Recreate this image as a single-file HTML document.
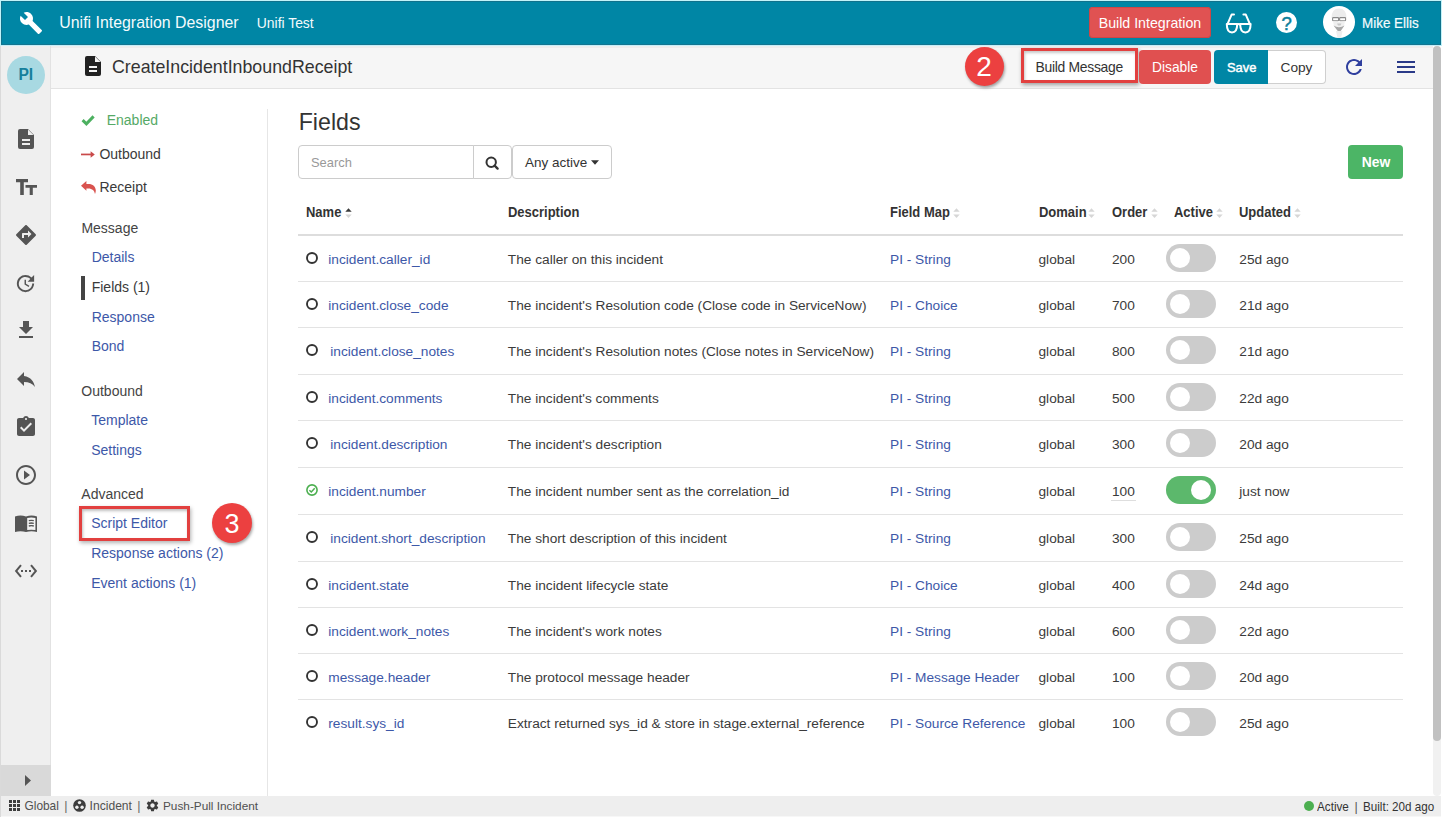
<!DOCTYPE html><html><head><meta charset="utf-8"><style>
html,body{margin:0;padding:0;}
body{width:1442px;height:817px;position:relative;overflow:hidden;background:#fff;font-family:"Liberation Sans",sans-serif;}
.t{position:absolute;white-space:nowrap;line-height:1;}
.r{position:absolute;box-sizing:border-box;}
</style></head><body>
<div class="r" style="left:0px;top:0px;width:1442px;height:817px;background:#fff"></div>
<div class="r" style="left:1px;top:1px;width:1440px;height:44px;background:#0086a5"></div>
<div class="r" style="left:0px;top:0px;width:1442px;height:1px;background:#c2f3f9"></div>
<div class="r" style="left:1px;top:1px;width:1440px;height:1px;background:#10728c"></div>
<div class="r" style="left:1440px;top:1px;width:1px;height:44px;background:#10728c"></div>
<div class="r" style="left:1441px;top:0px;width:1px;height:46px;background:#c2f3f9"></div>
<div class="r" style="left:0px;top:46px;width:1px;height:771px;background:#dadada"></div>
<div class="r" style="left:0px;top:0px;width:1px;height:46px;background:#c2f3f9"></div>
<div class="r" style="left:1px;top:1px;width:1px;height:44px;background:#10728c"></div>
<div class="r" style="left:1px;top:44px;width:1440px;height:1px;background:#137590"></div>
<div class="r" style="left:1px;top:45px;width:1440px;height:1px;background:#c4eef8"></div>
<svg class="r" style="left:19px;top:10.5px;" width="24" height="24" viewBox="0 0 24 24"><path fill="#fff" d="M22.7 19l-9.1-9.1c.9-2.3.4-5-1.5-6.9-2-2-5-2.4-7.4-1.3L9 6 6 9 1.6 4.7C.4 7.1.9 10.1 2.9 12.1c1.9 1.9 4.6 2.4 6.9 1.5l9.1 9.1c.4.4 1 .4 1.4 0l2.3-2.3c.5-.4.5-1.1.1-1.4z"/></svg>
<div class="t" style="left:59.3px;top:15.44px;font-size:15.9px;color:#f4fbfd;">Unifi Integration Designer</div>
<div class="t" style="left:256.8px;top:16.83px;font-size:13.9px;color:#f4fbfd;">Unifi Test</div>
<div class="r" style="left:1089px;top:7px;width:122px;height:31px;background:#e05252;border-radius:4px;box-shadow:inset 0 0 0 1px #cf4646"></div>
<div class="t" style="left:1098.7px;top:16.28px;font-size:14.2px;color:#ffffff;">Build Integration</div>
<svg class="r" style="left:1225px;top:12px;" width="28" height="22" viewBox="0 0 28 22"><g fill="none" stroke="#fff" stroke-width="2" stroke-linejoin="round" stroke-linecap="round"><path d="M1.8 12 H12.2 Q12.2 20.4 7 20.4 Q1.8 20.4 1.8 12Z"/><path d="M15.2 12 H25.6 Q25.6 20.4 20.4 20.4 Q15.2 20.4 15.2 12Z"/><path d="M12.2 12.6 Q13.7 11.4 15.2 12.6"/><path d="M2.6 11.8 L6.6 2.6 H9"/><path d="M24.8 11.8 L20.8 2.6 H18.4"/></g></svg>
<svg class="r" style="left:1276px;top:12px;" width="21" height="21" viewBox="0 0 21 21"><circle cx="10.5" cy="10.5" r="10.5" fill="#fff"/><text x="10.6" y="17.6" text-anchor="middle" font-family="Liberation Sans" font-size="18.5" fill="#0b7f9c" stroke="#0b7f9c" stroke-width="0.5">?</text></svg>
<svg class="r" style="left:1323px;top:6px;" width="32" height="32" viewBox="0 0 32 32"><circle cx="16" cy="16" r="16" fill="#fff"/><path d="M8.5 12 Q8.5 2.5 16 2.5 Q23.5 2.5 23.5 12 Z" fill="#ececec"/><rect x="9.6" y="11.6" width="6" height="3.2" rx="0.8" fill="none" stroke="#8a8a8a" stroke-width="1.1"/><rect x="16.6" y="11.6" width="6" height="3.2" rx="0.8" fill="none" stroke="#8a8a8a" stroke-width="1.1"/><path d="M10 15 Q16 17 22 15 L21 20 Q16 22 11 20Z" fill="#f0f0f0"/><path d="M14 17.5 H18.5 L17.5 19.5 H15Z" fill="#c8c8c8"/><path d="M10.5 19.5 Q16 23 21.5 19.5 L16.3 27 Z" fill="#a8a8a8"/><path d="M13 25 H19.5 L18 32 H14.5Z" fill="#eeeeee"/></svg>
<div class="t" style="left:1361.6px;top:16.24px;font-size:14.6px;color:#f4fbfd;transform:scaleX(0.92);transform-origin:0 0;-webkit-text-stroke:0.2px #f4fbfd;">Mike Ellis</div>
<div class="r" style="left:51px;top:46px;width:1382px;height:42px;background:#f6f6f6"></div>
<div class="r" style="left:51px;top:46px;width:1382px;height:2px;background:#eeeeee"></div>
<div class="r" style="left:51px;top:88px;width:1382px;height:1px;background:#e3e3e3"></div>
<svg class="r" style="left:85px;top:56px;" width="16" height="20" viewBox="0 0 16 20"><path fill="#222" d="M2 0 H10 L16 6 V18 Q16 20 14 20 H2 Q0 20 0 18 V2 Q0 0 2 0Z"/><path fill="#f5f5f5" d="M10 0.5 V6 H15.5Z"/><rect x="4" y="10" width="8" height="2" fill="#f5f5f5"/><rect x="4" y="14" width="8" height="2" fill="#f5f5f5"/></svg>
<div class="t" style="left:112.0px;top:58.93px;font-size:17.8px;color:#333333;">CreateIncidentInboundReceipt</div>
<div class="r" style="left:964.5px;top:46.5px;width:39px;height:39px;border-radius:50%;background:#ec4040;box-shadow:1px 2px 3px rgba(0,0,0,0.35)"></div>
<div class="t" style="left:974.0px;top:53.49px;font-size:28px;color:#ffffff;width:20px;text-align:center;">2</div>
<div class="r" style="left:1021px;top:48px;width:117px;height:35px;border:3px solid #e2403f;background:#fff;box-shadow:1px 2px 4px rgba(0,0,0,0.35), inset 1px 2px 3px rgba(0,0,0,0.22)"></div>
<div class="t" style="left:1035.6px;top:60.63px;font-size:13.9px;color:#333333;letter-spacing:-0.3px;">Build Message</div>
<div class="r" style="left:1139px;top:50px;width:72px;height:34px;background:#e05050;border-radius:4px"></div>
<div class="t" style="left:1152.0px;top:60.92px;font-size:13.8px;color:#ffffff;">Disable</div>
<div class="r" style="left:1214px;top:50px;width:54px;height:34px;background:#0086a5;border-radius:4px 0 0 4px"></div>
<div class="t" style="left:1227.0px;top:61.68px;font-size:12.9px;color:#ffffff;-webkit-text-stroke:0.45px #fff;">Save</div>
<div class="r" style="left:1268px;top:50px;width:58px;height:34px;background:#fff;border:1px solid #cfcfcf;border-left:none;border-radius:0 4px 4px 0"></div>
<div class="t" style="left:1280.5px;top:61.00px;font-size:13.7px;color:#333333;">Copy</div>
<svg class="r" style="left:1341.5px;top:55px;" width="24" height="24" viewBox="0 0 24 24"><path fill="#2f3f9e" d="M17.65 6.35C16.2 4.9 14.21 4 12 4c-4.42 0-7.99 3.58-7.99 8s3.57 8 7.99 8c3.73 0 6.84-2.55 7.73-6h-2.08c-.82 2.33-3.04 4-5.65 4-3.31 0-6-2.69-6-6s2.69-6 6-6c1.66 0 3.14.69 4.22 1.78L13 11h7V4l-2.35 2.35z"/></svg>
<div class="r" style="left:1397px;top:61px;width:18px;height:2px;background:#2a3a88"></div>
<div class="r" style="left:1397px;top:66px;width:18px;height:2px;background:#2a3a88"></div>
<div class="r" style="left:1397px;top:71px;width:18px;height:2px;background:#2a3a88"></div>
<div class="r" style="left:1433px;top:46px;width:8px;height:750px;background:#f1f1f1;border-radius:4px"></div>
<div class="r" style="left:1433px;top:46px;width:8px;height:695px;background:#c1c1c1;border-radius:4px"></div>
<div class="r" style="left:1441px;top:46px;width:1px;height:771px;background:#fff"></div>
<div class="r" style="left:1px;top:46px;width:49px;height:750px;background:#efefef"></div>
<div class="r" style="left:50px;top:46px;width:1px;height:719px;background:#e2e2e2"></div>
<div class="r" style="left:7px;top:56px;width:38px;height:38px;border-radius:50%;background:#a8d9e2"></div>
<div class="t" style="left:18.4px;top:66.99px;font-size:15.6px;color:#16809c;font-weight:bold;">PI</div>
<svg class="r" style="left:18px;top:129px;" width="16" height="20" viewBox="0 0 16 20"><path fill="#555" d="M2 0 H10 L16 6 V18 Q16 20 14 20 H2 Q0 20 0 18 V2 Q0 0 2 0Z"/><path fill="#efefef" d="M10 0.5 V6 H15.5Z"/><rect x="4" y="10" width="8" height="2" fill="#efefef"/><rect x="4" y="14" width="8" height="2" fill="#efefef"/></svg>
<svg class="r" style="left:16px;top:179px;" width="21" height="16" viewBox="0 0 21 16"><path fill="#555" d="M0 0 H12 V3.2 H7.8 V16 H4.2 V3.2 H0Z M9.5 6 H21 V8.8 H16.8 V16 H13.7 V8.8 H9.5Z"/></svg>
<svg class="r" style="left:14px;top:223px;" width="24" height="24" viewBox="0 0 24 24"><path fill="#555555" d="M21.71 11.29l-9-9c-.39-.39-1.02-.39-1.41 0l-9 9c-.39.39-.39 1.02 0 1.41l9 9c.39.39 1.02.39 1.41 0l9-9c.39-.38.39-1.01 0-1.41zM14 14.5V12h-4v3H8v-4c0-.55.45-1 1-1h5V7.5l3.5 3.5-3.5 3.5z"/></svg>
<svg class="r" style="left:14px;top:272px;" width="23" height="23" viewBox="0 0 24 24"><path fill="#555555" d="M21 10.12h-6.78l2.74-2.82c-2.73-2.7-7.15-2.8-9.88-.1-2.73 2.71-2.73 7.08 0 9.79s7.15 2.71 9.88 0C18.32 15.65 19 14.08 19 12.1h2c0 1.98-.88 4.55-2.64 6.29-3.51 3.48-9.21 3.48-12.72 0-3.5-3.47-3.53-9.11-.02-12.58s9.14-3.47 12.65 0L21 3v7.12zM12.5 8v4.25l3.5 2.08-.72 1.21L11 13V8h1.5z"/></svg>
<svg class="r" style="left:14px;top:318px;" width="24" height="24" viewBox="0 0 24 24"><path fill="#555555" d="M19 9h-4V3H9v6H5l7 7 7-7zM5 18v2h14v-2H5z"/></svg>
<svg class="r" style="left:14px;top:367px;" width="24" height="24" viewBox="0 0 24 24"><path fill="#555555" d="M10 9V5l-7 7 7 7v-4.1c5 0 8.5 1.6 11 5.1-1-5-4-10-11-11z"/></svg>
<svg class="r" style="left:14px;top:415px;" width="24" height="24" viewBox="0 0 24 24"><path fill="#555555" d="M19 3h-4.18C14.4 1.84 13.3 1 12 1c-1.3 0-2.4.84-2.82 2H5c-1.1 0-2 .9-2 2v14c0 1.1.9 2 2 2h14c1.1 0 2-.9 2-2V5c0-1.1-.9-2-2-2zm-7 0c.55 0 1 .45 1 1s-.45 1-1 1-1-.45-1-1 .45-1 1-1zm-2 14l-4-4 1.41-1.41L10 14.17l6.59-6.59L18 9l-8 8z"/></svg>
<svg class="r" style="left:14px;top:463px;" width="24" height="24" viewBox="0 0 24 24"><path fill="#555555" d="M10 16.5l6-4.5-6-4.5v9zM12 2C6.48 2 2 6.48 2 12s4.48 10 10 10 10-4.48 10-10S17.52 2 12 2zm0 18c-4.41 0-8-3.59-8-8s3.59-8 8-8 8 3.59 8 8-3.59 8-8 8z"/></svg>
<svg class="r" style="left:15px;top:515px;" width="22" height="17" viewBox="0 0 22 17"><path fill="#555" d="M0 1.4 Q5.5 -0.4 11 1.4 Q16.5 -0.4 22 1.4 V17 Q16.5 15.6 11 17 Q5.5 15.6 0 17Z"/><path fill="#f4f4f4" d="M12.2 2.9 Q16.3 1.9 20.4 2.9 V15.1 Q16.3 14.3 12.2 15.1Z"/><g stroke="#555" stroke-width="1.3"><path d="M13.8 5.6 Q16.3 5 18.8 5.6 M13.8 8.3 Q16.3 7.7 18.8 8.3 M13.8 11 Q16.3 10.4 18.8 11"/></g></svg>
<svg class="r" style="left:14px;top:559px;" width="24" height="24" viewBox="0 0 24 24"><path fill="#555555" d="M7.77 6.76L6.23 5.48.82 12l5.41 6.52 1.54-1.28L3.42 12l4.35-5.24zM7 13h2v-2H7v2zm10-2h-2v2h2v-2zm-6 2h2v-2h-2v2zm6.77-7.52l-1.54 1.28L20.58 12l-4.35 5.24 1.54 1.28L23.18 12l-5.41-6.52z"/></svg>
<div class="r" style="left:1px;top:765px;width:50px;height:31px;background:#d9d9d9"></div>
<svg class="r" style="left:25px;top:775px;" width="6" height="11" viewBox="0 0 6 11"><path fill="#555" d="M0 0 L6 5.5 L0 11Z"/></svg>
<div class="r" style="left:1px;top:796px;width:1440px;height:20px;background:#eeeeee"></div>
<div class="r" style="left:1px;top:816px;width:1440px;height:1px;background:#f7f7f7"></div>
<svg class="r" style="left:9px;top:800px;" width="11" height="11" viewBox="0 0 11 11"><rect x="0" y="0" width="3" height="3" fill="#3d3d3d"/><rect x="0" y="4" width="3" height="3" fill="#3d3d3d"/><rect x="0" y="8" width="3" height="3" fill="#3d3d3d"/><rect x="4" y="0" width="3" height="3" fill="#3d3d3d"/><rect x="4" y="4" width="3" height="3" fill="#3d3d3d"/><rect x="4" y="8" width="3" height="3" fill="#3d3d3d"/><rect x="8" y="0" width="3" height="3" fill="#3d3d3d"/><rect x="8" y="4" width="3" height="3" fill="#3d3d3d"/><rect x="8" y="8" width="3" height="3" fill="#3d3d3d"/></svg>
<div class="t" style="left:24.5px;top:800.52px;font-size:11.9px;color:#505050;">Global</div>
<div class="t" style="left:64.2px;top:800.42px;font-size:12.5px;color:#666;">|</div>
<svg class="r" style="left:73px;top:799px;" width="13" height="13" viewBox="0 0 13 13"><circle cx="6.5" cy="6.5" r="6.3" fill="#3d3d3d"/><circle cx="6.5" cy="3.6" r="1.7" fill="#eee"/><circle cx="3.9" cy="8.3" r="1.7" fill="#eee"/><circle cx="9.1" cy="8.3" r="1.7" fill="#eee"/></svg>
<div class="t" style="left:89.6px;top:800.35px;font-size:12.1px;color:#505050;">Incident</div>
<div class="t" style="left:137.2px;top:800.42px;font-size:12.5px;color:#666;">|</div>
<svg class="r" style="left:146px;top:799px;" width="13" height="13" viewBox="0 0 24 24"><path fill="#3d3d3d" d="M19.14 12.94c.04-.3.06-.61.06-.94 0-.32-.02-.64-.07-.94l2.03-1.58c.18-.14.23-.41.12-.61l-1.920-3.32c-.12-.22-.37-.29-.59-.22l-2.39.96c-.5-.38-1.030-.7-1.62-.94l-.36-2.54c-.04-.24-.24-.41-.48-.41h-3.84c-.24 0-.43.17-.47.41l-.36 2.54c-.59.24-1.13.57-1.62.94l-2.390-.96c-.22-.08-.47 0-.59.22L2.74 8.87c-.12.21-.08.47.12.61l2.03 1.58c-.05.3-.09.63-.09.94s.02.64.07.94l-2.03 1.58c-.18.14-.23.41-.12.61l1.92 3.32c.12.22.37.29.59.22l2.39-.96c.5.38 1.03.7 1.62.94l.36 2.54c.05.24.24.41.48.41h3.84c.24 0 .44-.17.47-.41l.36-2.54c.59-.24 1.13-.56 1.62-.94l2.39.96c.22.08.47 0 .59-.22l1.92-3.32c.12-.22.07-.47-.12-.61l-2.01-1.58zM12 15.6c-1.98 0-3.6-1.620-3.6-3.6s1.62-3.6 3.6-3.6 3.6 1.62 3.6 3.6-1.62 3.6-3.6 3.6z" transform="translate(-1.5,-1.5) scale(1.125)"/></svg>
<div class="t" style="left:163.0px;top:800.61px;font-size:11.8px;color:#505050;">Push-Pull Incident</div>
<div class="r" style="left:1303.5px;top:800.5px;width:10.5px;height:10.5px;border-radius:50%;background:#4caf50"></div>
<div class="t" style="left:1316.5px;top:800.67px;font-size:12.2px;color:#333;transform:scaleX(0.96);transform-origin:0 0;">Active</div>
<div class="t" style="left:1354.5px;top:800.82px;font-size:12.5px;color:#555;">|</div>
<div class="t" style="left:1363.3px;top:800.67px;font-size:12.2px;color:#333;transform:scaleX(0.955);transform-origin:0 0;">Built: 20d ago</div>
<div class="r" style="left:267px;top:109px;width:1px;height:687px;background:#e6e6e6"></div>
<svg class="r" style="left:81px;top:114px;" width="14" height="12" viewBox="0 0 14 12"><path fill="none" stroke="#4cb060" stroke-width="3" stroke-linecap="butt" d="M1.6 6.2 L5.4 9.8 L12.6 2.4"/></svg>
<div class="t" style="left:106.7px;top:112.85px;font-size:14.0px;color:#55a966;">Enabled</div>
<svg class="r" style="left:80.5px;top:151px;" width="14" height="7" viewBox="0 0 14 7"><rect x="0" y="2.6" width="10.5" height="1.7" fill="#c94a4a"/><path fill="#c94a4a" d="M9.6 0.2 L13.8 3.45 L9.6 6.7Z"/></svg>
<div class="t" style="left:99.4px;top:146.75px;font-size:14.0px;color:#3a3a3a;">Outbound</div>
<svg class="r" style="left:81px;top:181px;" width="15" height="13" viewBox="0 0 15 13"><path fill="#d9534f" d="M0 4.8 L5.4 0 V2.9 H7.4 C11.8 2.9 14.8 5.6 14.8 9.6 C14.8 10.9 14.5 12.1 14 13 C13.5 9.6 11.2 7.4 7.4 7.4 H5.4 V9.8 Z"/></svg>
<div class="t" style="left:99.4px;top:180.15px;font-size:14.0px;color:#3a3a3a;">Receipt</div>
<div class="t" style="left:81.4px;top:220.75px;font-size:14.0px;color:#444;">Message</div>
<div class="t" style="left:91.7px;top:249.75px;font-size:14.0px;color:#3d58a8;">Details</div>
<div class="r" style="left:81px;top:276px;width:4px;height:24px;background:#444"></div>
<div class="t" style="left:91.7px;top:279.75px;font-size:14.0px;color:#3a3a3a;">Fields (1)</div>
<div class="t" style="left:91.7px;top:309.75px;font-size:14.0px;color:#3d58a8;">Response</div>
<div class="t" style="left:91.7px;top:339.15px;font-size:14.0px;color:#3d58a8;">Bond</div>
<div class="t" style="left:81.3px;top:384.15px;font-size:14.0px;color:#444;">Outbound</div>
<div class="t" style="left:91.2px;top:413.25px;font-size:14.0px;color:#3d58a8;">Template</div>
<div class="t" style="left:91.2px;top:442.95px;font-size:14.0px;color:#3d58a8;">Settings</div>
<div class="t" style="left:81.3px;top:487.25px;font-size:14.0px;color:#444;">Advanced</div>
<div class="r" style="left:79px;top:506px;width:111px;height:35px;border:3px solid #e2403f;box-shadow:1px 2px 4px rgba(0,0,0,0.3), inset 1px 2px 3px rgba(0,0,0,0.25)"></div>
<div class="t" style="left:91.2px;top:516.35px;font-size:14.0px;color:#3d58a8;">Script Editor</div>
<div class="r" style="left:212px;top:502.6px;width:40px;height:40px;border-radius:50%;background:#ec4040;box-shadow:1px 2px 3px rgba(0,0,0,0.35)"></div>
<div class="t" style="left:222.0px;top:511.14px;font-size:27px;color:#ffffff;width:20px;text-align:center;">3</div>
<div class="t" style="left:91.2px;top:546.05px;font-size:14.0px;color:#3d58a8;">Response actions (2)</div>
<div class="t" style="left:91.2px;top:575.75px;font-size:14.0px;color:#3d58a8;">Event actions (1)</div>
<div class="t" style="left:298.7px;top:110.86px;font-size:23.2px;color:#333333;">Fields</div>
<div class="r" style="left:298px;top:145px;width:176px;height:34px;border:1px solid #cccccc;border-radius:4px 0 0 4px;background:#fff"></div>
<div class="t" style="left:311.0px;top:157.08px;font-size:12.9px;color:#999999;">Search</div>
<div class="r" style="left:473px;top:145px;width:39px;height:34px;border:1px solid #cccccc;border-radius:0 4px 4px 0;background:#fff"></div>
<svg class="r" style="left:485px;top:156px;" width="14" height="14" viewBox="0 0 14 14"><circle cx="6.2" cy="6.2" r="4.7" fill="none" stroke="#333" stroke-width="2"/><path d="M9.6 9.6 L12.6 12.6" stroke="#333" stroke-width="2.3" stroke-linecap="round"/></svg>
<div class="r" style="left:512px;top:145px;width:100px;height:34px;border:1px solid #cccccc;border-radius:4px;background:#fff"></div>
<div class="t" style="left:525.0px;top:156.07px;font-size:13.5px;color:#333333;">Any active</div>
<svg class="r" style="left:591px;top:160px;" width="8" height="5" viewBox="0 0 8 5"><path fill="#333" d="M0 0.3 H8 L4 4.8Z"/></svg>
<div class="r" style="left:1348px;top:145px;width:55px;height:34px;background:#4cb566;border-radius:4px"></div>
<div class="t" style="left:1361.7px;top:156.23px;font-size:13.9px;color:#ffffff;font-weight:bold;">New</div>
<div class="t" style="left:306.4px;top:204.72px;font-size:14.5px;color:#333333;font-weight:bold;transform:scaleX(0.895);transform-origin:0 0;">Name</div>
<svg class="r" style="left:345px;top:207.5px;" width="7" height="10" viewBox="0 0 7 10"><path fill="#3a3a3a" d="M0.3 3.8 L3.5 0.3 L6.7 3.8Z"/><path fill="#d6d6d6" d="M0.3 6.4 L3.5 9.9 L6.7 6.4Z"/></svg>
<div class="t" style="left:507.6px;top:204.72px;font-size:14.5px;color:#333333;font-weight:bold;transform:scaleX(0.895);transform-origin:0 0;">Description</div>
<div class="t" style="left:890.0px;top:204.72px;font-size:14.5px;color:#333333;font-weight:bold;transform:scaleX(0.895);transform-origin:0 0;">Field Map</div>
<svg class="r" style="left:952.5px;top:207.5px;" width="7" height="10" viewBox="0 0 7 10"><path fill="#d6d6d6" d="M0.3 3.8 L3.5 0.3 L6.7 3.8Z"/><path fill="#d6d6d6" d="M0.3 6.4 L3.5 9.9 L6.7 6.4Z"/></svg>
<div class="t" style="left:1038.5px;top:204.72px;font-size:14.5px;color:#333333;font-weight:bold;transform:scaleX(0.895);transform-origin:0 0;">Domain</div>
<svg class="r" style="left:1088px;top:207.5px;" width="7" height="10" viewBox="0 0 7 10"><path fill="#d6d6d6" d="M0.3 3.8 L3.5 0.3 L6.7 3.8Z"/><path fill="#d6d6d6" d="M0.3 6.4 L3.5 9.9 L6.7 6.4Z"/></svg>
<div class="t" style="left:1112.0px;top:204.72px;font-size:14.5px;color:#333333;font-weight:bold;transform:scaleX(0.895);transform-origin:0 0;">Order</div>
<svg class="r" style="left:1151px;top:207.5px;" width="7" height="10" viewBox="0 0 7 10"><path fill="#d6d6d6" d="M0.3 3.8 L3.5 0.3 L6.7 3.8Z"/><path fill="#d6d6d6" d="M0.3 6.4 L3.5 9.9 L6.7 6.4Z"/></svg>
<div class="t" style="left:1174.3px;top:204.72px;font-size:14.5px;color:#333333;font-weight:bold;transform:scaleX(0.895);transform-origin:0 0;">Active</div>
<svg class="r" style="left:1215.5px;top:207.5px;" width="7" height="10" viewBox="0 0 7 10"><path fill="#d6d6d6" d="M0.3 3.8 L3.5 0.3 L6.7 3.8Z"/><path fill="#d6d6d6" d="M0.3 6.4 L3.5 9.9 L6.7 6.4Z"/></svg>
<div class="t" style="left:1239.3px;top:204.72px;font-size:14.5px;color:#333333;font-weight:bold;transform:scaleX(0.895);transform-origin:0 0;">Updated</div>
<svg class="r" style="left:1293.5px;top:207.5px;" width="7" height="10" viewBox="0 0 7 10"><path fill="#d6d6d6" d="M0.3 3.8 L3.5 0.3 L6.7 3.8Z"/><path fill="#d6d6d6" d="M0.3 6.4 L3.5 9.9 L6.7 6.4Z"/></svg>
<div class="r" style="left:298px;top:234px;width:1105px;height:2px;background:#dddddd"></div>
<div class="r" style="left:298px;top:281px;width:1105px;height:1px;background:#e3e3e3"></div>
<svg class="r" style="left:306px;top:252px;" width="12" height="12" viewBox="0 0 12 12"><circle cx="6" cy="6" r="5" fill="none" stroke="#333" stroke-width="1.9"/></svg>
<div class="t" style="left:328.3px;top:252.60px;font-size:13.7px;color:#3d58a8;">incident.caller_id</div>
<div class="t" style="left:507.8px;top:252.60px;font-size:13.7px;color:#3b3b3b;">The caller on this incident</div>
<div class="t" style="left:890.0px;top:252.60px;font-size:13.7px;color:#3d58a8;">PI - String</div>
<div class="t" style="left:1038.5px;top:252.60px;font-size:13.7px;color:#3b3b3b;">global</div>
<div class="t" style="left:1112.0px;top:252.60px;font-size:13.7px;color:#3b3b3b;">200</div>
<div class="r" style="left:1166px;top:244.0px;width:50px;height:28px;border-radius:14px;background:#cccccc"></div>
<div class="r" style="left:1170px;top:248.0px;width:20px;height:20px;border-radius:50%;background:#fff"></div>
<div class="t" style="left:1239.3px;top:252.60px;font-size:13.7px;color:#3b3b3b;">25d ago</div>
<div class="r" style="left:298px;top:327px;width:1105px;height:1px;background:#e3e3e3"></div>
<svg class="r" style="left:306px;top:298px;" width="12" height="12" viewBox="0 0 12 12"><circle cx="6" cy="6" r="5" fill="none" stroke="#333" stroke-width="1.9"/></svg>
<div class="t" style="left:328.3px;top:298.60px;font-size:13.7px;color:#3d58a8;">incident.close_code</div>
<div class="t" style="left:507.8px;top:298.60px;font-size:13.7px;color:#3b3b3b;">The incident's Resolution code (Close code in ServiceNow)</div>
<div class="t" style="left:890.0px;top:298.60px;font-size:13.7px;color:#3d58a8;">PI - Choice</div>
<div class="t" style="left:1038.5px;top:298.60px;font-size:13.7px;color:#3b3b3b;">global</div>
<div class="t" style="left:1112.0px;top:298.60px;font-size:13.7px;color:#3b3b3b;">700</div>
<div class="r" style="left:1166px;top:290.0px;width:50px;height:28px;border-radius:14px;background:#cccccc"></div>
<div class="r" style="left:1170px;top:294.0px;width:20px;height:20px;border-radius:50%;background:#fff"></div>
<div class="t" style="left:1239.3px;top:298.60px;font-size:13.7px;color:#3b3b3b;">21d ago</div>
<div class="r" style="left:298px;top:374px;width:1105px;height:1px;background:#e3e3e3"></div>
<svg class="r" style="left:306px;top:344px;" width="12" height="12" viewBox="0 0 12 12"><circle cx="6" cy="6" r="5" fill="none" stroke="#333" stroke-width="1.9"/></svg>
<div class="t" style="left:330.3px;top:344.60px;font-size:13.7px;color:#3d58a8;">incident.close_notes</div>
<div class="t" style="left:507.8px;top:344.60px;font-size:13.7px;color:#3b3b3b;">The incident's Resolution notes (Close notes in ServiceNow)</div>
<div class="t" style="left:890.0px;top:344.60px;font-size:13.7px;color:#3d58a8;">PI - String</div>
<div class="t" style="left:1038.5px;top:344.60px;font-size:13.7px;color:#3b3b3b;">global</div>
<div class="t" style="left:1112.0px;top:344.60px;font-size:13.7px;color:#3b3b3b;">800</div>
<div class="r" style="left:1166px;top:336.0px;width:50px;height:28px;border-radius:14px;background:#cccccc"></div>
<div class="r" style="left:1170px;top:340.0px;width:20px;height:20px;border-radius:50%;background:#fff"></div>
<div class="t" style="left:1239.3px;top:344.60px;font-size:13.7px;color:#3b3b3b;">21d ago</div>
<div class="r" style="left:298px;top:420px;width:1105px;height:1px;background:#e3e3e3"></div>
<svg class="r" style="left:306px;top:391px;" width="12" height="12" viewBox="0 0 12 12"><circle cx="6" cy="6" r="5" fill="none" stroke="#333" stroke-width="1.9"/></svg>
<div class="t" style="left:328.3px;top:391.60px;font-size:13.7px;color:#3d58a8;">incident.comments</div>
<div class="t" style="left:507.8px;top:391.60px;font-size:13.7px;color:#3b3b3b;">The incident's comments</div>
<div class="t" style="left:890.0px;top:391.60px;font-size:13.7px;color:#3d58a8;">PI - String</div>
<div class="t" style="left:1038.5px;top:391.60px;font-size:13.7px;color:#3b3b3b;">global</div>
<div class="t" style="left:1112.0px;top:391.60px;font-size:13.7px;color:#3b3b3b;">500</div>
<div class="r" style="left:1166px;top:383.0px;width:50px;height:28px;border-radius:14px;background:#cccccc"></div>
<div class="r" style="left:1170px;top:387.0px;width:20px;height:20px;border-radius:50%;background:#fff"></div>
<div class="t" style="left:1239.3px;top:391.60px;font-size:13.7px;color:#3b3b3b;">22d ago</div>
<div class="r" style="left:298px;top:467px;width:1105px;height:1px;background:#e3e3e3"></div>
<svg class="r" style="left:306px;top:437px;" width="12" height="12" viewBox="0 0 12 12"><circle cx="6" cy="6" r="5" fill="none" stroke="#333" stroke-width="1.9"/></svg>
<div class="t" style="left:330.3px;top:437.60px;font-size:13.7px;color:#3d58a8;">incident.description</div>
<div class="t" style="left:507.8px;top:437.60px;font-size:13.7px;color:#3b3b3b;">The incident's description</div>
<div class="t" style="left:890.0px;top:437.60px;font-size:13.7px;color:#3d58a8;">PI - String</div>
<div class="t" style="left:1038.5px;top:437.60px;font-size:13.7px;color:#3b3b3b;">global</div>
<div class="t" style="left:1112.0px;top:437.60px;font-size:13.7px;color:#3b3b3b;">300</div>
<div class="r" style="left:1166px;top:429.0px;width:50px;height:28px;border-radius:14px;background:#cccccc"></div>
<div class="r" style="left:1170px;top:433.0px;width:20px;height:20px;border-radius:50%;background:#fff"></div>
<div class="t" style="left:1239.3px;top:437.60px;font-size:13.7px;color:#3b3b3b;">20d ago</div>
<div class="r" style="left:298px;top:514px;width:1105px;height:1px;background:#e3e3e3"></div>
<svg class="r" style="left:306px;top:484px;" width="12" height="12" viewBox="0 0 12 12"><circle cx="6" cy="6" r="5.1" fill="none" stroke="#4caf50" stroke-width="1.6"/><path d="M3.4 6.2 L5.3 8 L8.7 4.3" fill="none" stroke="#4caf50" stroke-width="1.5"/></svg>
<div class="t" style="left:328.3px;top:484.60px;font-size:13.7px;color:#3d58a8;">incident.number</div>
<div class="t" style="left:507.8px;top:484.60px;font-size:13.7px;color:#3b3b3b;">The incident number sent as the correlation_id</div>
<div class="t" style="left:890.0px;top:484.60px;font-size:13.7px;color:#3d58a8;">PI - String</div>
<div class="t" style="left:1038.5px;top:484.60px;font-size:13.7px;color:#3b3b3b;">global</div>
<div class="t" style="left:1112.0px;top:484.60px;font-size:13.7px;color:#3b3b3b;">100</div>
<div class="r" style="left:1166px;top:476.0px;width:50px;height:28px;border-radius:14px;background:#5cb86c"></div>
<div class="r" style="left:1191px;top:480.0px;width:20px;height:20px;border-radius:50%;background:#fff"></div>
<div class="r" style="left:1111px;top:500px;width:25px;height:1px;background:#dedede"></div>
<div class="t" style="left:1239.3px;top:484.60px;font-size:13.7px;color:#3b3b3b;">just now</div>
<div class="r" style="left:298px;top:561px;width:1105px;height:1px;background:#e3e3e3"></div>
<svg class="r" style="left:306px;top:531px;" width="12" height="12" viewBox="0 0 12 12"><circle cx="6" cy="6" r="5" fill="none" stroke="#333" stroke-width="1.9"/></svg>
<div class="t" style="left:330.3px;top:531.60px;font-size:13.7px;color:#3d58a8;">incident.short_description</div>
<div class="t" style="left:507.8px;top:531.60px;font-size:13.7px;color:#3b3b3b;">The short description of this incident</div>
<div class="t" style="left:890.0px;top:531.60px;font-size:13.7px;color:#3d58a8;">PI - String</div>
<div class="t" style="left:1038.5px;top:531.60px;font-size:13.7px;color:#3b3b3b;">global</div>
<div class="t" style="left:1112.0px;top:531.60px;font-size:13.7px;color:#3b3b3b;">300</div>
<div class="r" style="left:1166px;top:523.0px;width:50px;height:28px;border-radius:14px;background:#cccccc"></div>
<div class="r" style="left:1170px;top:527.0px;width:20px;height:20px;border-radius:50%;background:#fff"></div>
<div class="t" style="left:1239.3px;top:531.60px;font-size:13.7px;color:#3b3b3b;">25d ago</div>
<div class="r" style="left:298px;top:607px;width:1105px;height:1px;background:#e3e3e3"></div>
<svg class="r" style="left:306px;top:578px;" width="12" height="12" viewBox="0 0 12 12"><circle cx="6" cy="6" r="5" fill="none" stroke="#333" stroke-width="1.9"/></svg>
<div class="t" style="left:328.3px;top:578.60px;font-size:13.7px;color:#3d58a8;">incident.state</div>
<div class="t" style="left:507.8px;top:578.60px;font-size:13.7px;color:#3b3b3b;">The incident lifecycle state</div>
<div class="t" style="left:890.0px;top:578.60px;font-size:13.7px;color:#3d58a8;">PI - Choice</div>
<div class="t" style="left:1038.5px;top:578.60px;font-size:13.7px;color:#3b3b3b;">global</div>
<div class="t" style="left:1112.0px;top:578.60px;font-size:13.7px;color:#3b3b3b;">400</div>
<div class="r" style="left:1166px;top:570.0px;width:50px;height:28px;border-radius:14px;background:#cccccc"></div>
<div class="r" style="left:1170px;top:574.0px;width:20px;height:20px;border-radius:50%;background:#fff"></div>
<div class="t" style="left:1239.3px;top:578.60px;font-size:13.7px;color:#3b3b3b;">24d ago</div>
<div class="r" style="left:298px;top:653px;width:1105px;height:1px;background:#e3e3e3"></div>
<svg class="r" style="left:306px;top:624px;" width="12" height="12" viewBox="0 0 12 12"><circle cx="6" cy="6" r="5" fill="none" stroke="#333" stroke-width="1.9"/></svg>
<div class="t" style="left:328.3px;top:624.60px;font-size:13.7px;color:#3d58a8;">incident.work_notes</div>
<div class="t" style="left:507.8px;top:624.60px;font-size:13.7px;color:#3b3b3b;">The incident's work notes</div>
<div class="t" style="left:890.0px;top:624.60px;font-size:13.7px;color:#3d58a8;">PI - String</div>
<div class="t" style="left:1038.5px;top:624.60px;font-size:13.7px;color:#3b3b3b;">global</div>
<div class="t" style="left:1112.0px;top:624.60px;font-size:13.7px;color:#3b3b3b;">600</div>
<div class="r" style="left:1166px;top:616.0px;width:50px;height:28px;border-radius:14px;background:#cccccc"></div>
<div class="r" style="left:1170px;top:620.0px;width:20px;height:20px;border-radius:50%;background:#fff"></div>
<div class="t" style="left:1239.3px;top:624.60px;font-size:13.7px;color:#3b3b3b;">22d ago</div>
<div class="r" style="left:298px;top:699px;width:1105px;height:1px;background:#e3e3e3"></div>
<svg class="r" style="left:306px;top:670px;" width="12" height="12" viewBox="0 0 12 12"><circle cx="6" cy="6" r="5" fill="none" stroke="#333" stroke-width="1.9"/></svg>
<div class="t" style="left:328.3px;top:670.60px;font-size:13.7px;color:#3d58a8;">message.header</div>
<div class="t" style="left:507.8px;top:670.60px;font-size:13.7px;color:#3b3b3b;">The protocol message header</div>
<div class="t" style="left:890.0px;top:670.60px;font-size:13.7px;color:#3d58a8;">PI - Message Header</div>
<div class="t" style="left:1038.5px;top:670.60px;font-size:13.7px;color:#3b3b3b;">global</div>
<div class="t" style="left:1112.0px;top:670.60px;font-size:13.7px;color:#3b3b3b;">100</div>
<div class="r" style="left:1166px;top:662.0px;width:50px;height:28px;border-radius:14px;background:#cccccc"></div>
<div class="r" style="left:1170px;top:666.0px;width:20px;height:20px;border-radius:50%;background:#fff"></div>
<div class="t" style="left:1239.3px;top:670.60px;font-size:13.7px;color:#3b3b3b;">20d ago</div>
<svg class="r" style="left:306px;top:716px;" width="12" height="12" viewBox="0 0 12 12"><circle cx="6" cy="6" r="5" fill="none" stroke="#333" stroke-width="1.9"/></svg>
<div class="t" style="left:328.3px;top:716.60px;font-size:13.7px;color:#3d58a8;">result.sys_id</div>
<div class="t" style="left:507.8px;top:716.60px;font-size:13.7px;color:#3b3b3b;">Extract returned sys_id &amp; store in stage.external_reference</div>
<div class="t" style="left:890.0px;top:716.60px;font-size:13.7px;color:#3d58a8;">PI - Source Reference</div>
<div class="t" style="left:1038.5px;top:716.60px;font-size:13.7px;color:#3b3b3b;">global</div>
<div class="t" style="left:1112.0px;top:716.60px;font-size:13.7px;color:#3b3b3b;">100</div>
<div class="r" style="left:1166px;top:708.0px;width:50px;height:28px;border-radius:14px;background:#cccccc"></div>
<div class="r" style="left:1170px;top:712.0px;width:20px;height:20px;border-radius:50%;background:#fff"></div>
<div class="t" style="left:1239.3px;top:716.60px;font-size:13.7px;color:#3b3b3b;">25d ago</div>
</body></html>
